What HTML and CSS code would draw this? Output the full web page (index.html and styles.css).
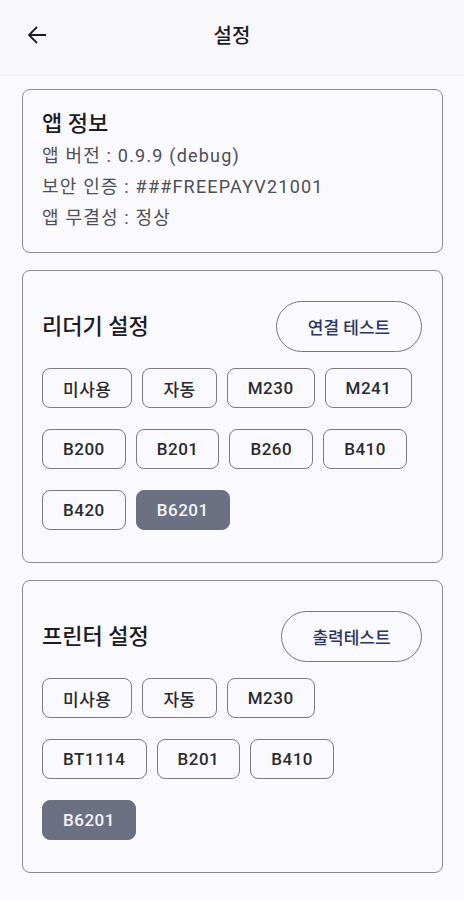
FILE: index.html
```html
<!DOCTYPE html>
<html lang="ko">
<head>
    <meta charset="UTF-8">
    <meta name="viewport" content="width=device-width, initial-scale=1.0">
    <title>설정</title>
    <link rel="stylesheet" href="styles.css">
</head>
<body>
    <header class="app-bar">
        <button class="back-btn" aria-label="뒤로">
            <svg width="20" height="20" viewBox="0 0 20 20"><path d="M19 10H2M10 2L2 10l8 8" fill="none" stroke="#1c1b1f" stroke-width="1.8"/></svg>
        </button>
        <h1>설정</h1>
    </header>

    <main class="content">
        <!-- 앱 정보 -->
        <section class="card info-card">
            <h2>앱 정보</h2>
            <p>앱 버전 : 0.9.9 (debug)</p>
            <p>보안 인증 : ###FREEPAYV21001</p>
            <p>앱 무결성 : 정상</p>
        </section>

        <!-- 리더기 설정 -->
        <section class="card">
            <div class="card-head">
                <h2>리더기 설정</h2>
                <button class="test-btn">연결 테스트</button>
            </div>
            <div class="chips">
                <div class="chip-row">
                    <span class="chip">미사용</span>
                    <span class="chip">자동</span>
                    <span class="chip">M230</span>
                    <span class="chip">M241</span>
                </div>
                <div class="chip-row">
                    <span class="chip">B200</span>
                    <span class="chip">B201</span>
                    <span class="chip">B260</span>
                    <span class="chip">B410</span>
                </div>
                <div class="chip-row">
                    <span class="chip">B420</span>
                    <span class="chip selected">B6201</span>
                </div>
            </div>
        </section>

        <!-- 프린터 설정 -->
        <section class="card">
            <div class="card-head">
                <h2>프린터 설정</h2>
                <button class="test-btn print">출력테스트</button>
            </div>
            <div class="chips">
                <div class="chip-row">
                    <span class="chip">미사용</span>
                    <span class="chip">자동</span>
                    <span class="chip">M230</span>
                </div>
                <div class="chip-row">
                    <span class="chip">BT1114</span>
                    <span class="chip">B201</span>
                    <span class="chip">B410</span>
                </div>
                <div class="chip-row">
                    <span class="chip selected">B6201</span>
                </div>
            </div>
        </section>
    </main>
</body>
</html>
```

FILE: styles.css
```css
body {
    font-family: Roboto, "Noto Sans CJK KR", sans-serif;
    background-color: #faf9fd;
    color: #1c1b1f;
    margin: 0;
    padding: 0;
}
.app-bar {
    display: flex;
    align-items: center;
    height: 75px;
    padding: 0 0 0 27px;
    background-color: #f8f7fc;
    border-bottom: 1px solid #efedf4;
    position: relative;
}
.back-btn {
    background: none;
    border: none;
    padding: 0;
    width: 20px;
    height: 20px;
    margin-top: -5px;
}
.back-btn svg {
    display: block;
}
.app-bar h1 {
    position: absolute;
    left: 0;
    right: 0;
    margin: 0;
    top: 20px;
    text-align: center;
    font-size: 20px;
    font-weight: 500;
    pointer-events: none;
}
.content {
    padding: 13px 21px 20px 22px;
    display: flex;
    flex-direction: column;
    gap: 17px;
}
.card {
    border: 1px solid #8a8a8e;
    border-radius: 8px;
    padding: 30px 20px 32px 19px;
}
.card h2 {
    margin: 0;
    font-size: 22px;
    font-weight: 500;
}
.info-card {
    padding: 18px 20px 19px 19px;
}
.info-card h2 {
    line-height: 32px;
}
.info-card p {
    margin: 0;
    font-size: 18px;
    letter-spacing: 1.2px;
    line-height: 31px;
    color: #4f4f55;
}
.card-head {
    display: flex;
    justify-content: space-between;
    align-items: center;
    margin-bottom: 16px;
}
.card-head h2 {
    margin-top: -6px;
}
.test-btn {
    height: 51px;
    width: 146px;
    border: 1px solid #77767c;
    border-radius: 26px;
    background: transparent;
    font-family: inherit;
    font-size: 17px;
    font-weight: 500;
    color: #2c3563;
    padding: 0;
}
.test-btn.print {
    width: 141px;
}
.chips {
    display: flex;
    flex-direction: column;
    gap: 21px;
}
.chip-row {
    display: flex;
    gap: 10px;
}
.chip {
    display: flex;
    align-items: center;
    justify-content: center;
    box-sizing: border-box;
    height: 40px;
    padding: 0 20px;
    border: 1px solid #7b7b80;
    border-radius: 8px;
    font-size: 17px;
    letter-spacing: 0.5px;
    font-weight: 500;
    color: #2a2a2e;
}
.chip.selected {
    background-color: #6b7182;
    border-color: #6b7182;
    color: #f4f4f8;
}
```
